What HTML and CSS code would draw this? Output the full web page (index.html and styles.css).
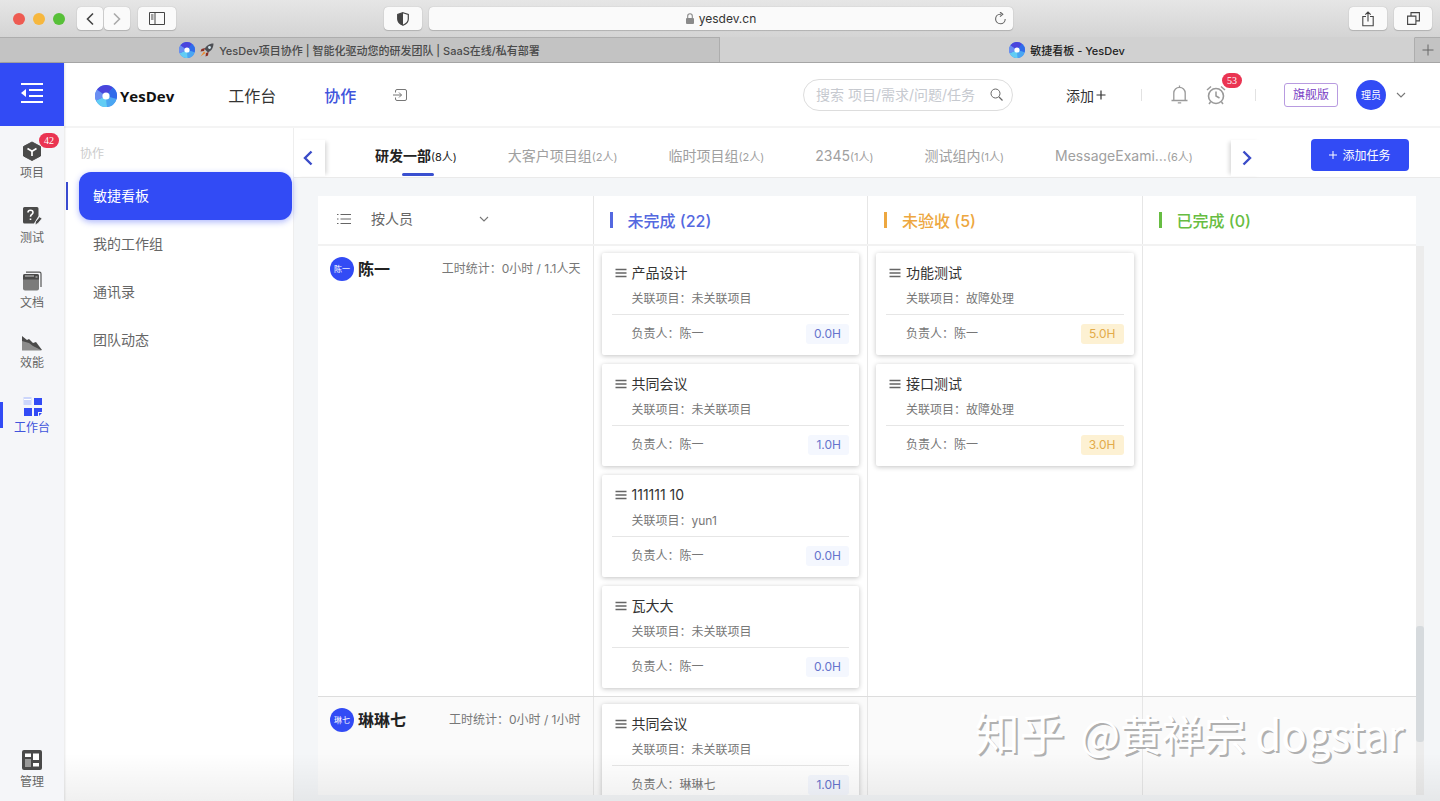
FILE: index.html
```html
<!DOCTYPE html>
<html lang="zh-CN">
<head>
    <meta charset="UTF-8">
    <title>敏捷看板 - YesDev</title>
    <link rel="stylesheet" href="styles.css">
</head>
<body>
    <svg width="0" height="0" class="defs">
        <defs>
            <symbol id="logo" viewBox="0 0 22 22">
                <circle cx="11" cy="11" r="11" fill="#3f7cf0"/>
                <path d="M11 11 2 4.700A11 11 0 0 1 18 2.600z" fill="#4a45dc"/>
                <path d="M11 11 18 2.600A11 11 0 0 1 21.500 14z" fill="#2f6cea"/>
                <path d="M11 11 21.500 14A11 11 0 0 1 12 22z" fill="#4aa6f2"/>
                <path d="M11 11 12 22A11 11 0 0 1 1 15.500z" fill="#62cdf4"/>
                <path d="M11 11 1 15.500A11 11 0 0 1 2 4.700z" fill="#6b8ff2"/>
                <circle cx="11" cy="11" r="3.600" fill="#fff"/>
            </symbol>
            <symbol id="drag" viewBox="0 0 12 10">
                <path d="M0.500 1.500h11M0.500 5h11M0.500 8.500h11" stroke="#666" stroke-width="1.400"/>
            </symbol>
            <symbol id="down" viewBox="0 0 10 10">
                <path d="M1 3l4 4 4-4" fill="none" stroke="#777" stroke-width="1.100"/>
            </symbol>
        </defs>
    </svg>

    <div class="browser-bar">
        <div class="bar-left">
            <span class="light red"></span>
            <span class="light yellow"></span>
            <span class="light green"></span>
            <div class="nav-buttons">
                <button class="chrome-btn back" aria-label="后退">
                    <svg width="10" height="14" viewBox="0 0 10 14"><path d="M8 1.500 2.500 7 8 12.500" fill="none" stroke="#444" stroke-width="1.600"/></svg>
                </button>
                <button class="chrome-btn" aria-label="前进">
                    <svg width="10" height="14" viewBox="0 0 10 14"><path d="M2 1.500 7.500 7 2 12.500" fill="none" stroke="#aaa" stroke-width="1.600"/></svg>
                </button>
            </div>
            <button class="chrome-btn wide" aria-label="边栏">
                <svg width="16" height="13" viewBox="0 0 16 13"><path d="M.5.5h15v12H.5zM6 .5v12M2 3h2.500M2 5h2.500M2 7h2.500" fill="none" stroke="#444"/></svg>
            </button>
        </div>
        <div class="bar-center">
            <button class="chrome-btn wide" aria-label="隐私">
                <svg width="12" height="14" viewBox="0 0 12 14"><path d="M6 .7 11.300 2.500V7c0 3-2.300 5-5.300 6.300C3 12 .7 10 .7 7V2.500z" fill="none" stroke="#444" stroke-width="1.200"/><path d="M6 .7v12.600C3 12 .7 10 .7 7V2.500z" fill="#444"/></svg>
            </button>
            <div class="address">
                <svg width="8" height="11" viewBox="0 0 8 11"><rect y="5" width="8" height="6" rx="1" fill="#8a8a8a"/><path d="M1.700 5V3a2.300 2.300 0 0 1 4.600 0v2" fill="none" stroke="#8a8a8a" stroke-width="1.100"/></svg>
                <span>yesdev.cn</span>
                <button class="reload" aria-label="刷新">
                    <svg width="13" height="13" viewBox="0 0 13 13"><path d="M7 2.200H6.200A4.800 4.800 0 1 0 11.200 7M6 0l2.800 2.200L6 4.600" fill="none" stroke="#666" stroke-width="1.100"/></svg>
                </button>
            </div>
        </div>
        <div class="bar-right">
            <button class="chrome-btn wide" aria-label="分享">
                <svg width="12" height="16" viewBox="0 0 12 16"><path d="M4 5.500H.8v9.300h10.400V5.500H8M6 10.500V1M3.300 3.700 6 1l2.700 2.700" fill="none" stroke="#444" stroke-width="1.100"/></svg>
            </button>
            <button class="chrome-btn wide" aria-label="所有标签页">
                <svg width="13" height="13" viewBox="0 0 13 13"><path d="M.6 4.100h8.300v8.300H.6zM4 4V.6h8.400v8.300H9" fill="none" stroke="#444" stroke-width="1.100"/></svg>
            </button>
        </div>
    </div>

    <div class="browser-tabs">
        <div class="browser-tab">
            <svg width="16" height="16"><use href="#logo"/></svg>
            <svg width="14" height="14" viewBox="0 0 14 14"><path d="M13.500.5C9 .5 6 3 4.500 6L8 9.500c3-1.500 5.500-4.500 5.500-9z" fill="#4d4f54"/><path d="M5 5 1.500 6 .5 8.500 4 8zM8.500 9 8 12.500l-2.500 1L6 10z" fill="#8d2f24"/><path d="M4 8.500.5 13.500 5.500 10z" fill="#ee8a2c"/><circle cx="9.500" cy="4.500" r="1.400" fill="#cfe3ee"/></svg>
            <span>YesDev项目协作 | 智能化驱动您的研发团队 | SaaS在线/私有部署</span>
        </div>
        <div class="browser-tab current">
            <svg width="16" height="16"><use href="#logo"/></svg>
            <span>敏捷看板 - YesDev</span>
        </div>
        <button class="new-tab" aria-label="新标签页">
            <svg width="12" height="12" viewBox="0 0 12 12"><path d="M6 .5v11M.5 6h11" stroke="#666"/></svg>
        </button>
    </div>

    <div class="app">
        <nav class="rail">
            <button class="collapse" aria-label="收起菜单">
                <svg width="24" height="20" viewBox="0 0 24 20"><path d="M1 1h22M9 7h14M9 13h14M1 19h22" stroke="#fff" stroke-width="1.800"/><path d="M6 6v8L1 10z" fill="#fff"/></svg>
            </button>
            <div class="rail-items">
                <a href="#" class="rail-item">
                    <svg width="20" height="20" viewBox="0 0 20 20"><path d="M10 1 18.500 5.500v9.500L10 19.500 1.500 15V5.500z" fill="#4a4a4a" stroke="#4a4a4a" stroke-linejoin="round"/><path d="M5.500 7.500 10 10.200l4.500-2.700M10 10v5" fill="none" stroke="#fff" stroke-width="1.700"/></svg>
                    <span>项目</span>
                    <b class="badge">42</b>
                </a>
                <a href="#" class="rail-item">
                    <svg width="20" height="20" viewBox="0 0 20 20"><path d="M2.500 1h12.500a1.500 1.500 0 0 1 1.500 1.500V10L12 17.500H2.500A1.500 1.500 0 0 1 1 16V2.500A1.500 1.500 0 0 1 2.500 1z" fill="#4a4a4a"/><path d="M6 6.500c0-3 5-3 5 0 0 2-2.500 2-2.500 4.200M8.500 12.500v1.600" fill="none" stroke="#fff" stroke-width="1.600"/><path d="M13 19l.5-3.300 4-5 2.500 1.800-4 5z" fill="#4a4a4a" stroke="#f5f6f9" stroke-width=".8"/></svg>
                    <span>测试</span>
                </a>
                <a href="#" class="rail-item">
                    <svg width="20" height="20" viewBox="0 0 20 20"><path d="M4 1.200h13.500a1.500 1.500 0 0 1 1.500 1.500V16" fill="none" stroke="#555" stroke-width="1.200"/><rect x="1" y="3" width="16" height="16.500" rx="2" fill="#7b7b7b"/><path d="M1 8.500V5a2 2 0 0 1 2-2h12a2 2 0 0 1 2 2v3.500z" fill="#4a4a4a"/><path d="M3 5h9M13.500 6h2" stroke="#ccc"/></svg>
                    <span>文档</span>
                </a>
                <a href="#" class="rail-item">
                    <svg width="22" height="15" viewBox="0 0 22 15"><path d="M1 0l5 4 2-1 4 4 3-1 6 8H1z" fill="#4a4a4a"/><path d="M1 5l7 2 4 3 9 4.500H1z" fill="#8c8c8c"/></svg>
                    <span>效能</span>
                </a>
                <a href="#" class="rail-item active">
                    <svg width="20" height="20" viewBox="0 0 20 20"><rect x="1.500" y="1" width="8" height="8" fill="#ccd6fb"/><path d="M2 3.500h7" stroke="#fff"/><path d="M12 2h8v7h-8zM2 12h8v8H2zM12 12h8v4h-4v4h-4z" fill="#324bf5"/><path d="M17 17h3l-3 3z" fill="#324bf5"/></svg>
                    <span>工作台</span>
                </a>
            </div>
            <a href="#" class="rail-item manage">
                <svg width="20" height="20" viewBox="0 0 20 20"><rect width="20" height="20" rx="2" fill="#4a4a4a"/><path d="M3 3.500h6v3.500H3zM11 3.500h6V10h-6zM11 13h6v3.500h-6z" fill="#fff"/><path d="M3 9h6v8H3z" fill="#999"/></svg>
                <span>管理</span>
            </a>
        </nav>

        <div class="page">
            <header class="top">
                <a href="#" class="brand">
                    <svg width="22" height="22"><use href="#logo"/></svg>
                    <span>YesDev</span>
                </a>
                <nav class="top-nav">
                    <a href="#">工作台</a>
                    <a href="#" class="active">协作</a>
                </nav>
                <button class="icon-btn" aria-label="进入">
                    <svg width="14" height="12" viewBox="0 0 14 12"><path d="M2.500 3.500V2A1.500 1.500 0 0 1 4 .5h8A1.500 1.500 0 0 1 13.500 2v8a1.500 1.500 0 0 1-1.500 1.500H4A1.500 1.500 0 0 1 2.500 10V8.500M0 6h8.500M6 3.500 8.500 6 6 8.500" fill="none" stroke="#777"/></svg>
                </button>
                <div class="top-right">
                    <div class="search">
                        <input type="text" aria-label="搜索" placeholder="搜索 项目/需求/问题/任务">
                        <svg width="13" height="13" viewBox="0 0 13 13"><circle cx="5.500" cy="5.500" r="4.500" fill="none" stroke="#666"/><path d="M9 9l3.500 3.500" stroke="#666" stroke-width="1.300"/></svg>
                    </div>
                    <button class="add">添加<svg width="10" height="10" viewBox="0 0 10 10"><path d="M5 .5v9M.5 5h9" stroke="#333" stroke-width="1.200"/></svg></button>
                    <i class="divider"></i>
                    <button class="icon-btn bell" aria-label="通知">
                        <svg width="17" height="19" viewBox="0 0 17 19"><path d="M.5 15.500h16M2.800 15.500V8a5.700 5.700 0 0 1 11.400 0v7.500M8.500 2.300V.5M6.800 17.800h3.400" fill="none" stroke="#999" stroke-width="1.300"/></svg>
                    </button>
                    <button class="icon-btn alarm" aria-label="提醒">
                        <svg width="20" height="20" viewBox="0 0 20 20"><circle cx="10" cy="11" r="7.500" fill="none" stroke="#999" stroke-width="1.600"/><path d="M10 6.500V11l3.500 2M1 5l4-3.500M19 5l-4-3.500M4.500 17 3 19M15.500 17l1.500 2" fill="none" stroke="#999" stroke-width="1.500"/></svg>
                        <b class="badge">53</b>
                    </button>
                    <i class="divider second"></i>
                    <span class="edition">旗舰版</span>
                    <button class="user">
                        <span class="avatar">理员</span>
                        <svg width="10" height="10"><use href="#down"/></svg>
                    </button>
                </div>
            </header>

            <div class="content">
                <nav class="submenu">
                    <h2>协作</h2>
                    <a href="#" class="active">敏捷看板</a>
                    <a href="#">我的工作组</a>
                    <a href="#">通讯录</a>
                    <a href="#">团队动态</a>
                </nav>

                <main>
                    <div class="teams">
                        <button class="arrow prev" aria-label="上一页">
                            <svg width="10" height="16" viewBox="0 0 10 16"><path d="M8.500 1.500 2 8l6.500 6.500" fill="none" stroke="#3a4bc8" stroke-width="2.400"/></svg>
                        </button>
                        <div class="team-list">
                            <a href="#" class="active">研发一部<small>(8人)</small></a>
                            <a href="#">大客户项目组<small>(2人)</small></a>
                            <a href="#">临时项目组<small>(2人)</small></a>
                            <a href="#">2345<small>(1人)</small></a>
                            <a href="#">测试组内<small>(1人)</small></a>
                            <a href="#">MessageExami…<small>(6人)</small></a>
                        </div>
                        <button class="arrow next" aria-label="下一页">
                            <svg width="10" height="16" viewBox="0 0 10 16"><path d="M1.500 1.500 8 8l-6.500 6.500" fill="none" stroke="#3a4bc8" stroke-width="2.400"/></svg>
                        </button>
                        <button class="add-task"><svg width="8" height="8" viewBox="0 0 8 8"><path d="M4 0v8M0 4h8" stroke="#fff"/></svg>添加任务</button>
                    </div>

                    <div class="board">
                        <div class="board-row board-head">
                            <div class="filter">
                                <svg width="14" height="12" viewBox="0 0 14 12"><path d="M3.500 1.500H14M3.500 6H14M3.500 10.500H14M0 1.500h1.500M0 6h1.500M0 10.500h1.500" stroke="#666"/></svg>
                                <div class="select">
                                    <select aria-label="分组方式"><option>按人员</option></select>
                                    <svg width="10" height="10"><use href="#down"/></svg>
                                </div>
                            </div>
                            <h3 class="todo">未完成 (22)</h3>
                            <h3 class="check">未验收 (5)</h3>
                            <h3 class="done">已完成 (0)</h3>
                        </div>

                        <div class="board-body">
                            <div class="rows">
                                <div class="board-row">
                                    <div class="cell person">
                                        <span class="avatar small">陈一</span>
                                        <strong>陈一</strong>
                                        <span class="hours">工时统计：0小时 / 1.1人天</span>
                                    </div>
                                    <div class="cell">
                                        <div class="card">
                                            <h4><svg width="12" height="10"><use href="#drag"/></svg>产品设计</h4>
                                            <p>关联项目：未关联项目</p>
                                            <div class="card-foot">负责人：陈一<span class="tag">0.0H</span></div>
                                        </div>
                                        <div class="card">
                                            <h4><svg width="12" height="10"><use href="#drag"/></svg>共同会议</h4>
                                            <p>关联项目：未关联项目</p>
                                            <div class="card-foot">负责人：陈一<span class="tag">1.0H</span></div>
                                        </div>
                                        <div class="card">
                                            <h4><svg width="12" height="10"><use href="#drag"/></svg>111111 10</h4>
                                            <p>关联项目：yun1</p>
                                            <div class="card-foot">负责人：陈一<span class="tag">0.0H</span></div>
                                        </div>
                                        <div class="card">
                                            <h4><svg width="12" height="10"><use href="#drag"/></svg>瓦大大</h4>
                                            <p>关联项目：未关联项目</p>
                                            <div class="card-foot">负责人：陈一<span class="tag">0.0H</span></div>
                                        </div>
                                    </div>
                                    <div class="cell">
                                        <div class="card">
                                            <h4><svg width="12" height="10"><use href="#drag"/></svg>功能测试</h4>
                                            <p>关联项目：故障处理</p>
                                            <div class="card-foot">负责人：陈一<span class="tag orange">5.0H</span></div>
                                        </div>
                                        <div class="card">
                                            <h4><svg width="12" height="10"><use href="#drag"/></svg>接口测试</h4>
                                            <p>关联项目：故障处理</p>
                                            <div class="card-foot">负责人：陈一<span class="tag orange">3.0H</span></div>
                                        </div>
                                    </div>
                                    <div class="cell"></div>
                                </div>
                                <div class="board-row alt">
                                    <div class="cell person">
                                        <span class="avatar small">琳七</span>
                                        <strong>琳琳七</strong>
                                        <span class="hours">工时统计：0小时 / 1小时</span>
                                    </div>
                                    <div class="cell">
                                        <div class="card">
                                            <h4><svg width="12" height="10"><use href="#drag"/></svg>共同会议</h4>
                                            <p>关联项目：未关联项目</p>
                                            <div class="card-foot">负责人：琳琳七<span class="tag">1.0H</span></div>
                                        </div>
                                    </div>
                                    <div class="cell"></div>
                                    <div class="cell"></div>
                                </div>
                            </div>
                            <div class="track"><div class="thumb"></div></div>
                        </div>
                    </div>
                </main>
            </div>
        </div>
    </div>

    <div class="watermark"><span>知乎</span> @黄禅宗 dogstar</div>
</body>
</html>
```
FILE: styles.css
```css
* {
    box-sizing: border-box;
}

body {
    margin: 0;
    height: 100vh;
    display: flex;
    flex-direction: column;
    overflow: hidden;
    position: relative;
    font-family: Inter, "Noto Sans CJK SC", sans-serif;
    font-size: 14px;
    color: #333;
    background: #f4f6f8;
}

/* soft shade along the window's bottom edge */
body::after {
    content: "";
    position: absolute;
    left: 0;
    right: 0;
    bottom: 0;
    height: 48px;
    background: linear-gradient(rgba(0, 0, 0, 0), rgba(0, 0, 0, 0.06));
    pointer-events: none;
}

a {
    color: inherit;
    text-decoration: none;
}

button {
    display: flex;
    align-items: center;
    justify-content: center;
    padding: 0;
    border: none;
    background: none;
    font-family: inherit;
    color: inherit;
    cursor: pointer;
}

h2, h3, h4, p {
    margin: 0;
}

svg {
    display: block;
    flex-shrink: 0;
}

.defs {
    position: absolute;
}

/* browser window */
.browser-bar {
    display: grid;
    grid-template-columns: 384fr 629fr 427fr;
    align-items: center;
    height: 37px;
    flex-shrink: 0;
    background: linear-gradient(#e6e6e6, #d4d4d4);
}

.bar-left {
    display: flex;
    align-items: center;
    gap: 8px;
    padding-left: 13px;
}

.light {
    width: 12px;
    height: 12px;
    border-radius: 50%;
}

.red {
    background: #ee5b52;
}

.yellow {
    background: #f6b73e;
}

.green {
    background: #57c038;
}

.nav-buttons {
    display: flex;
    gap: 1px;
    margin-left: 4px;
}

.chrome-btn {
    width: 26px;
    height: 23px;
    background: #fafafa;
    border-radius: 4px;
    box-shadow: 0 0 1px rgba(0, 0, 0, 0.3), 0 1px 1px rgba(0, 0, 0, 0.15);
}

.wide {
    width: 38px;
    flex-shrink: 0;
}

.bar-center {
    display: flex;
    gap: 7px;
}

.address {
    flex: 1;
    display: flex;
    align-items: center;
    justify-content: center;
    gap: 5px;
    position: relative;
    height: 23px;
    border-radius: 4px;
    background: #fafafa;
    box-shadow: 0 0 1px rgba(0, 0, 0, 0.3), 0 1px 1px rgba(0, 0, 0, 0.15);
    font-size: 12px;
}

.reload {
    position: absolute;
    right: 6px;
}

.bar-right {
    display: flex;
    justify-content: flex-end;
    gap: 7px;
    padding-right: 8px;
}

.browser-tabs {
    display: grid;
    grid-template-columns: 50% 1fr 25px;
    height: 26px;
    flex-shrink: 0;
    background: #c3c3c3;
    border-bottom: 1px solid #a5a5a5;
    font-size: 11px;
    font-weight: 500;
}

.browser-tab {
    display: flex;
    align-items: center;
    justify-content: center;
    gap: 5px;
    color: #4a4a4a;
    border-top: 1px solid #adadad;
    border-right: 1px solid #adadad;
}

.browser-tab.current {
    color: #222;
    background: #d1d1d1;
    border-top-color: #d1d1d1;
}

.new-tab {
    border-top: 1px solid #adadad;
}

/* left rail */
.app {
    flex: 1;
    min-height: 0;
    display: flex;
}

.rail {
    width: 64px;
    flex-shrink: 0;
    display: flex;
    flex-direction: column;
    background: #f5f6f9;
    box-shadow: 1px 0 2px rgba(0, 0, 0, 0.1);
    z-index: 1;
}

.collapse {
    height: 63px;
    padding-bottom: 4px;
    background: #324bf5;
}

.rail-items {
    flex: 1;
    display: flex;
    flex-direction: column;
    gap: 23px;
    padding-top: 15px;
}

.rail-item {
    display: flex;
    flex-direction: column;
    align-items: center;
    gap: 2px;
    position: relative;
    font-size: 12px;
    line-height: 20px;
    color: #666;
}

.rail-item.active {
    color: #4054dc;
}

.rail-item.active::before {
    content: "";
    position: absolute;
    left: 0;
    top: 6px;
    width: 3px;
    height: 26px;
    background: #324bf5;
}

.manage {
    padding-bottom: 9px;
}

.badge {
    position: absolute;
    min-width: 20px;
    padding: 0 5px;
    border-radius: 8px;
    background: #ea3452;
    color: #fff;
    font: 10px/15px "Liberation Serif", serif;
    text-align: center;
}

.rail-item .badge {
    top: -8px;
    right: 5px;
}

/* top header */
.page {
    flex: 1;
    min-width: 0;
    display: flex;
    flex-direction: column;
}

.top {
    display: flex;
    align-items: center;
    height: 65px;
    flex-shrink: 0;
    padding: 0 34px 0 31px;
    background: #fff;
    border-bottom: 2px solid #f4f4f4;
}

.brand {
    display: flex;
    align-items: center;
    gap: 3px;
    margin-right: 54px;
    padding-top: 2px;
    font-family: "Open Sans", sans-serif;
    font-size: 15px;
    font-weight: 700;
    color: #111;
}

.top-nav {
    display: flex;
    gap: 48px;
    margin-right: 37px;
    font-size: 16px;
    color: #333;
}

.top-nav .active {
    color: #4054dc;
    font-weight: 500;
}

.top-right {
    display: flex;
    align-items: center;
    margin-left: auto;
}

.search {
    display: flex;
    align-items: center;
    width: 210px;
    height: 32px;
    margin-right: 53px;
    padding: 0 9px 0 12px;
    border: 1px solid #ddd;
    border-radius: 16px;
}

.search input {
    flex: 1;
    min-width: 0;
    padding: 0;
    border: none;
    outline: none;
    background: none;
    font-family: inherit;
    font-size: 14px;
}

.search input::placeholder {
    color: #c6c9cf;
}

.add {
    gap: 2px;
    font-size: 14px;
    margin-right: 35px;
}

.divider {
    width: 1px;
    height: 12px;
    margin-right: 29px;
    background: #e2e2e2;
}

.divider.second {
    margin-right: 28px;
}

.bell {
    margin-right: 18px;
}

.alarm {
    position: relative;
    margin-right: 29px;
}

.alarm .badge {
    top: -12px;
    left: 16px;
}

.edition {
    padding: 0 8px;
    margin-right: 18px;
    border: 1px solid #b89be0;
    border-radius: 3px;
    font-size: 12px;
    line-height: 22px;
    color: #7a3fc4;
}

.user {
    gap: 10px;
}

.avatar {
    display: flex;
    align-items: center;
    justify-content: center;
    width: 30px;
    height: 30px;
    flex-shrink: 0;
    border-radius: 50%;
    background: #324bf5;
    color: #fff;
    font-size: 10px;
}

.avatar.small {
    width: 24px;
    height: 24px;
    font-size: 8px;
}

/* submenu */
.content {
    flex: 1;
    min-height: 0;
    display: flex;
}

.submenu {
    width: 230px;
    flex-shrink: 0;
    padding: 16px 1px 0 15px;
    background: #fff;
    border-right: 1px solid #eee;
}

.submenu h2 {
    padding-left: 1px;
    margin-bottom: 8px;
    font-size: 12px;
    line-height: 20px;
    font-weight: 400;
    color: #ccc;
}

.submenu a {
    display: block;
    position: relative;
    padding-left: 14px;
    line-height: 48px;
    color: #666;
}

.submenu .active {
    color: #fff;
    background: #324bf5;
    border-radius: 12px;
    box-shadow: 0 2px 6px rgba(50, 75, 245, 0.4);
}

.submenu .active::before {
    content: "";
    position: absolute;
    left: -13px;
    top: 10px;
    width: 2px;
    height: 28px;
    background: #3a4bd0;
}

/* team tabs */
main {
    flex: 1;
    min-width: 0;
    display: flex;
    flex-direction: column;
}

.teams {
    display: flex;
    align-items: center;
    height: 50px;
    flex-shrink: 0;
    padding-right: 31px;
    background: #fff;
    border-bottom: 1px solid #eaeaea;
}

.arrow {
    width: 31px;
    height: 36px;
    margin-top: 10px;
}

.prev {
    padding-right: 4px;
    box-shadow: 4px 0 4px -2px rgba(0, 0, 0, 0.15);
}

.next {
    width: 32px;
    box-shadow: -4px 0 4px -2px rgba(0, 0, 0, 0.15);
}

.team-list {
    flex: 1;
    min-width: 0;
    display: flex;
    gap: 51px;
    padding-left: 50px;
    overflow: hidden;
    white-space: nowrap;
    line-height: 38px;
    padding-top: 8px;
    color: #a0a0a0;
}

.team-list small {
    font-size: 11px;
    font-weight: 400;
}

.team-list a {
    position: relative;
}

.team-list .active {
    color: #222;
    font-weight: 600;
}

.team-list .active::after {
    content: "";
    position: absolute;
    left: 27px;
    bottom: 0;
    width: 32px;
    height: 3px;
    border-radius: 2px;
    background: #3a50d0;
}

.add-task {
    gap: 5px;
    width: 98px;
    height: 32px;
    margin-left: 48px;
    margin-top: 4px;
    border-radius: 4px;
    background: #324bf5;
    color: #fff;
    font-size: 12px;
}

/* board */
.board {
    flex: 1;
    min-height: 0;
    display: flex;
    flex-direction: column;
    padding: 18px 16px 6px 24px;
}

.board-row {
    display: grid;
    grid-template-columns: repeat(4, 1fr);
    background: #fff;
    border-bottom: 1px solid #ddd;
}

.board-row > * + * {
    border-left: 1px solid #e6e6e6;
}

.board-head {
    height: 50px;
    flex-shrink: 0;
    margin-right: 8px;
    border-bottom: 2px solid #f2f2f2;
}

.filter {
    display: flex;
    align-items: center;
    padding: 0 0 3px 19px;
    gap: 20px;
}

.select {
    position: relative;
    display: flex;
    align-items: center;
}

.select select {
    appearance: none;
    width: 120px;
    padding: 0;
    border: none;
    background: none;
    font-family: inherit;
    font-size: 14px;
    color: #666;
}

.select svg {
    position: absolute;
    right: 2px;
    pointer-events: none;
}

.board-head h3 {
    display: flex;
    align-items: center;
    gap: 15px;
    padding-left: 16px;
    padding-bottom: 1px;
    font-size: 16px;
    font-weight: 500;
}

.board-head h3::before {
    content: "";
    width: 3px;
    height: 16px;
    background: currentColor;
}

.todo {
    color: #5468e0;
}

.check {
    color: #eda740;
}

.done {
    color: #67bd42;
}

.board-body {
    flex: 1;
    min-height: 0;
    display: flex;
}

.rows {
    flex: 1;
    min-width: 0;
    overflow: hidden;
}

.alt {
    background: #fafafa;
}

.cell {
    display: flex;
    flex-direction: column;
    gap: 9px;
    padding: 7px 8px 8px;
}

.person {
    flex-direction: row;
    align-items: flex-start;
    gap: 4px;
    padding: 11px 12px;
    line-height: 24px;
}

.person strong {
    font-size: 16px;
    font-weight: 600;
    color: #222;
}

.hours {
    margin-left: auto;
    font-size: 12px;
    color: #777;
}

.card {
    padding: 10px 10px 11px;
    background: #fff;
    border-radius: 2px;
    box-shadow: 0 1px 5px rgba(0, 0, 0, 0.24);
    font-size: 12px;
    line-height: 20px;
    color: #777;
}

.card h4 {
    display: flex;
    align-items: center;
    gap: 5px;
    padding-left: 3px;
    font-size: 14px;
    font-weight: 400;
    color: #333;
}

.card p {
    margin-top: 6px;
    padding: 0 0 5px 20px;
    border-bottom: 1px solid #e6e6e6;
}

.card-foot {
    display: flex;
    justify-content: space-between;
    margin-top: 9px;
    padding-left: 20px;
}

.tag {
    padding: 0 8px;
    border-radius: 3px;
    background: #f4f7fe;
    color: #6674cc;
}

.tag.orange {
    background: #fdf1d3;
    color: #e3ab4a;
}

.track {
    width: 8px;
    padding-top: 380px;
    background: #ececec;
}

.thumb {
    height: 116px;
    border-radius: 3px;
    background: #d6dadd;
}

.watermark {
    position: absolute;
    right: 36px;
    bottom: 38px;
    z-index: 2;
    font-family: "Noto Sans CJK SC", sans-serif;
    font-size: 42px;
    line-height: 60px;
    color: #fff;
    text-shadow: 2px 2px #b0b0b0;
}

.watermark span {
    margin-right: 6px;
    font-size: 45px;
}
```
